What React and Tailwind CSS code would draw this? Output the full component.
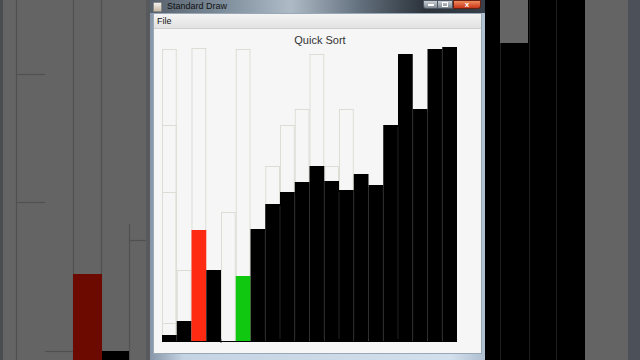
import React from "react";

// tops of bars in canvas coords (page y - 28), bottom at 312
const BARS = [
  { top: 306, color: "#000" },
  { top: 292, color: "#000" },
  { top: 201, color: "#ff2a12" },
  { top: 241, color: "#000" },
  { top: 312, color: "#000" },
  { top: 247, color: "#10c810" },
  { top: 200, color: "#000" },
  { top: 175, color: "#000" },
  { top: 163, color: "#000" },
  { top: 153, color: "#000" },
  { top: 137, color: "#000" },
  { top: 152, color: "#000" },
  { top: 161, color: "#000" },
  { top: 145, color: "#000" },
  { top: 156, color: "#000" },
  { top: 96, color: "#000" },
  { top: 25, color: "#000" },
  { top: 80, color: "#000" },
  { top: 20, color: "#000" },
  { top: 18, color: "#000" },
];

// faint trails of earlier heights
const TRAILS = [
  [0, 20], [0, 96], [0, 163], [0, 294], [1, 241], [2, 19], [4, 183],
  [5, 20], [7, 137], [8, 96], [9, 80], [10, 25], [11, 137], [12, 80],
];

const X0 = 8;
const BW = 14.75;
const BOTTOM = 312;

function BarChart() {
  return (
    <svg width="325" height="324" className="block">
      {TRAILS.map(([i, t], k) => (
        <g key={k} stroke="#dcded6" strokeWidth="1" fill="none">
          <line x1={X0 + i * BW + 0.5} y1={t} x2={X0 + i * BW + 0.5} y2={BOTTOM} />
          <line x1={X0 + (i + 1) * BW - 0.5} y1={t} x2={X0 + (i + 1) * BW - 0.5} y2={BOTTOM} />
          <line x1={X0 + i * BW} y1={t + 0.5} x2={X0 + (i + 1) * BW} y2={t + 0.5} />
        </g>
      ))}
      {BARS.map((b, i) => (
        <rect key={i} x={X0 + i * BW} y={b.top} width={BW} height={BOTTOM - b.top} fill={b.color} />
      ))}
      {BARS.map((b, i) =>
        i > 0 && b.color === "#000" && BARS[i - 1].color === "#000" ? (
          <line key={"s" + i} x1={X0 + i * BW} y1={Math.max(b.top, BARS[i - 1].top) + 2} x2={X0 + i * BW} y2={BOTTOM - 2} stroke="#2b2b2b" strokeWidth="0.8" />
        ) : null
      )}
      <line x1={X0} y1={BOTTOM + 0.5} x2={X0 + 20 * BW} y2={BOTTOM + 0.5} stroke="#000" />
    </svg>
  );
}

function LeftBackdrop() {
  return (
    <svg width="150" height="360" className="block">
      <rect width="150" height="360" fill="#646464" />
      <rect width="3" height="360" fill="#4a4c50" />
      <g stroke="#505050" strokeWidth="1.2">
        <line x1="16.5" y1="0" x2="16.5" y2="360" />
        <line x1="73.5" y1="0" x2="73.5" y2="360" />
        <line x1="101.5" y1="0" x2="101.5" y2="360" />
        <line x1="129.5" y1="224" x2="129.5" y2="360" />
        <line x1="16" y1="74.5" x2="45" y2="74.5" />
        <line x1="16" y1="202.5" x2="45" y2="202.5" />
        <line x1="129" y1="240.5" x2="150" y2="240.5" />
        <line x1="45" y1="351.5" x2="73" y2="351.5" />
      </g>
      <rect x="73" y="274" width="29" height="86" fill="#6c0a00" />
      <rect x="102" y="351" width="27" height="9" fill="#000" />
      <rect x="146" y="0" width="4" height="360" fill="#58595c" />
    </svg>
  );
}

function RightBackdrop() {
  return (
    <svg width="155" height="360" className="block">
      <rect width="155" height="360" fill="#000" />
      <rect x="15" y="0" width="28" height="43" fill="#656565" />
      <g stroke="#1e1e1e" strokeWidth="1">
        <line x1="15.5" y1="43" x2="15.5" y2="360" />
        <line x1="44.5" y1="0" x2="44.5" y2="360" />
        <line x1="71.5" y1="0" x2="71.5" y2="360" />
      </g>
      <rect x="100" y="0" width="43" height="360" fill="#646464" />
      <rect x="143" y="0" width="12" height="360" fill="#4b5059" />
    </svg>
  );
}

function TitleBar() {
  return (
    <div className="h-[13px] flex items-center relative bg-[linear-gradient(90deg,#56606b_0%,#7f8e9c_22%,#aebbc7_42%,#65727f_62%,#2c333b_82%,#37404a_100%)]">
      <div className="w-[9px] h-[10px] ml-[3px] bg-[linear-gradient(180deg,#f2f2f2,#c8b8a0)] rounded-[1px] border border-[#8a8a8a]" />
      <span className="ml-[5px] text-[9px] leading-none text-[#111] font-['Liberation_Sans',sans-serif]">Standard Draw</span>
      <div className="ml-auto flex items-start self-start h-[9px] mr-[4px]">
        <div className="w-[15px] h-[9px] bg-[linear-gradient(180deg,#c9d0d8,#7f8891)] border border-[#4c5560] rounded-bl-[3px] flex items-center justify-center">
          <div className="w-[6px] h-[2px] bg-white" />
        </div>
        <div className="w-[15px] h-[9px] bg-[linear-gradient(180deg,#c9d0d8,#7f8891)] border-y border-r border-[#4c5560] flex items-center justify-center">
          <div className="w-[6px] h-[5px] border border-white" />
        </div>
        <div className="w-[28px] h-[9px] bg-[linear-gradient(180deg,#f08a5c,#c8361a)] border border-[#6a2010] rounded-br-[3px] flex items-center justify-center">
          <span className="text-[8px] leading-none text-white font-bold font-['Liberation_Sans',sans-serif]">x</span>
        </div>
      </div>
    </div>
  );
}

export default function App() {
  return (
    <div className="w-[640px] h-[360px] flex overflow-hidden bg-black">
      <LeftBackdrop />
      <div className="w-[335px] h-[360px] flex flex-col bg-[#a9bccf]">
        <TitleBar />
        <div className="flex-1 flex px-[3px] pb-[6px] bg-[linear-gradient(90deg,#8696a8,#c5d4e3_10%,#d2dfec_90%,#aebfd0)]">
          <div className="flex-1 flex flex-col bg-[#f6f6f6] border border-[#9aa8b6]">
            <div className="h-[15px] flex items-center px-[3px] bg-[linear-gradient(180deg,#f4f4f4,#e2e2e2)] border-b border-[#d0d0d0]">
              <span className="text-[9px] leading-none text-[#111] font-['Liberation_Sans',sans-serif]">File</span>
            </div>
            <div className="flex-1 relative">
              <div className="absolute left-0 right-0 top-[6px] text-center text-[11px] leading-none text-[#333] font-['Liberation_Sans',sans-serif] pl-[5px]">
                Quick Sort
              </div>
              <BarChart />
            </div>
          </div>
        </div>
      </div>
      <RightBackdrop />
    </div>
  );
}
